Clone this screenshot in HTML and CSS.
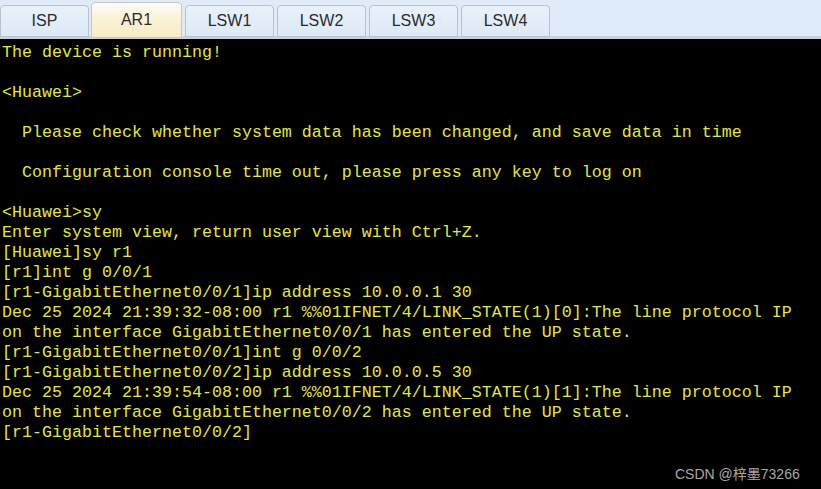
FILE: index.html
```html
<!DOCTYPE html>
<html>
<head>
<meta charset="utf-8">
<link rel="stylesheet" href="styles.css">
</head>
<body>
<div class="app">
  <div class="tabbar">
    <div class="tab">ISP</div>
    <div class="tab active">AR1</div>
    <div class="tab">LSW1</div>
    <div class="tab">LSW2</div>
    <div class="tab">LSW3</div>
    <div class="tab">LSW4</div>
  </div>
  <pre class="console">The device is running!

&lt;Huawei&gt;

  Please check whether system data has been changed, and save data in time

  Configuration console time out, please press any key to log on

&lt;Huawei&gt;sy
Enter system view, return user view with Ctrl+Z.
[Huawei]sy r1
[r1]int g 0/0/1
[r1-GigabitEthernet0/0/1]ip address 10.0.0.1 30
Dec 25 2024 21:39:32-08:00 r1 %%01IFNET/4/LINK_STATE(1)[0]:The line protocol IP
on the interface GigabitEthernet0/0/1 has entered the UP state.
[r1-GigabitEthernet0/0/1]int g 0/0/2
[r1-GigabitEthernet0/0/2]ip address 10.0.0.5 30
Dec 25 2024 21:39:54-08:00 r1 %%01IFNET/4/LINK_STATE(1)[1]:The line protocol IP
on the interface GigabitEthernet0/0/2 has entered the UP state.
[r1-GigabitEthernet0/0/2]</pre>
  <div class="watermark">CSDN @梓墨73266</div>
</div>
</body>
</html>
```
FILE: styles.css
```css
html, body {
  margin: 0;
  padding: 0;
  background: #000;
}
.app {
  position: relative;
  width: 821px;
  height: 489px;
  overflow: hidden;
  background: #000;
}
.tabbar {
  display: flex;
  align-items: flex-end;
  gap: 3px;
  height: 36px;
  background: #dfebf8;
  border-bottom: 3px solid #c9d1db;
  box-sizing: content-box;
}
.tab {
  width: 87px;
  height: 30px;
  margin-bottom: -1px;
  display: flex;
  align-items: center;
  justify-content: center;
  font-family: "Liberation Sans", Arial, sans-serif;
  font-size: 16px;
  color: #2b2b2b;
  background: linear-gradient(#e8f1fb, #dde9f6);
  border: 1px solid #b9c2cc;
  border-radius: 4px 4px 0 0;
}
.tab.active {
  width: 89px;
  height: 34px;
  margin-left: -1px;
  margin-bottom: -2px;
  background: linear-gradient(#fdfdfb 0%, #fbf2d8 40%, #f9ebc4 100%);
  border-color: #c8c8c0;
}
.console {
  margin: 0;
  padding: 4px 0 0 2px;
  font-family: "Liberation Mono", "Courier New", monospace;
  font-size: 16.67px;
  line-height: 20px;
  color: #e4e44c;
  white-space: pre;
}
.watermark {
  position: absolute;
  left: 675px;
  top: 463px;
  font-family: "Liberation Sans", "Noto Sans CJK SC", sans-serif;
  font-size: 14px;
  color: #a8a8a8;
}
```
